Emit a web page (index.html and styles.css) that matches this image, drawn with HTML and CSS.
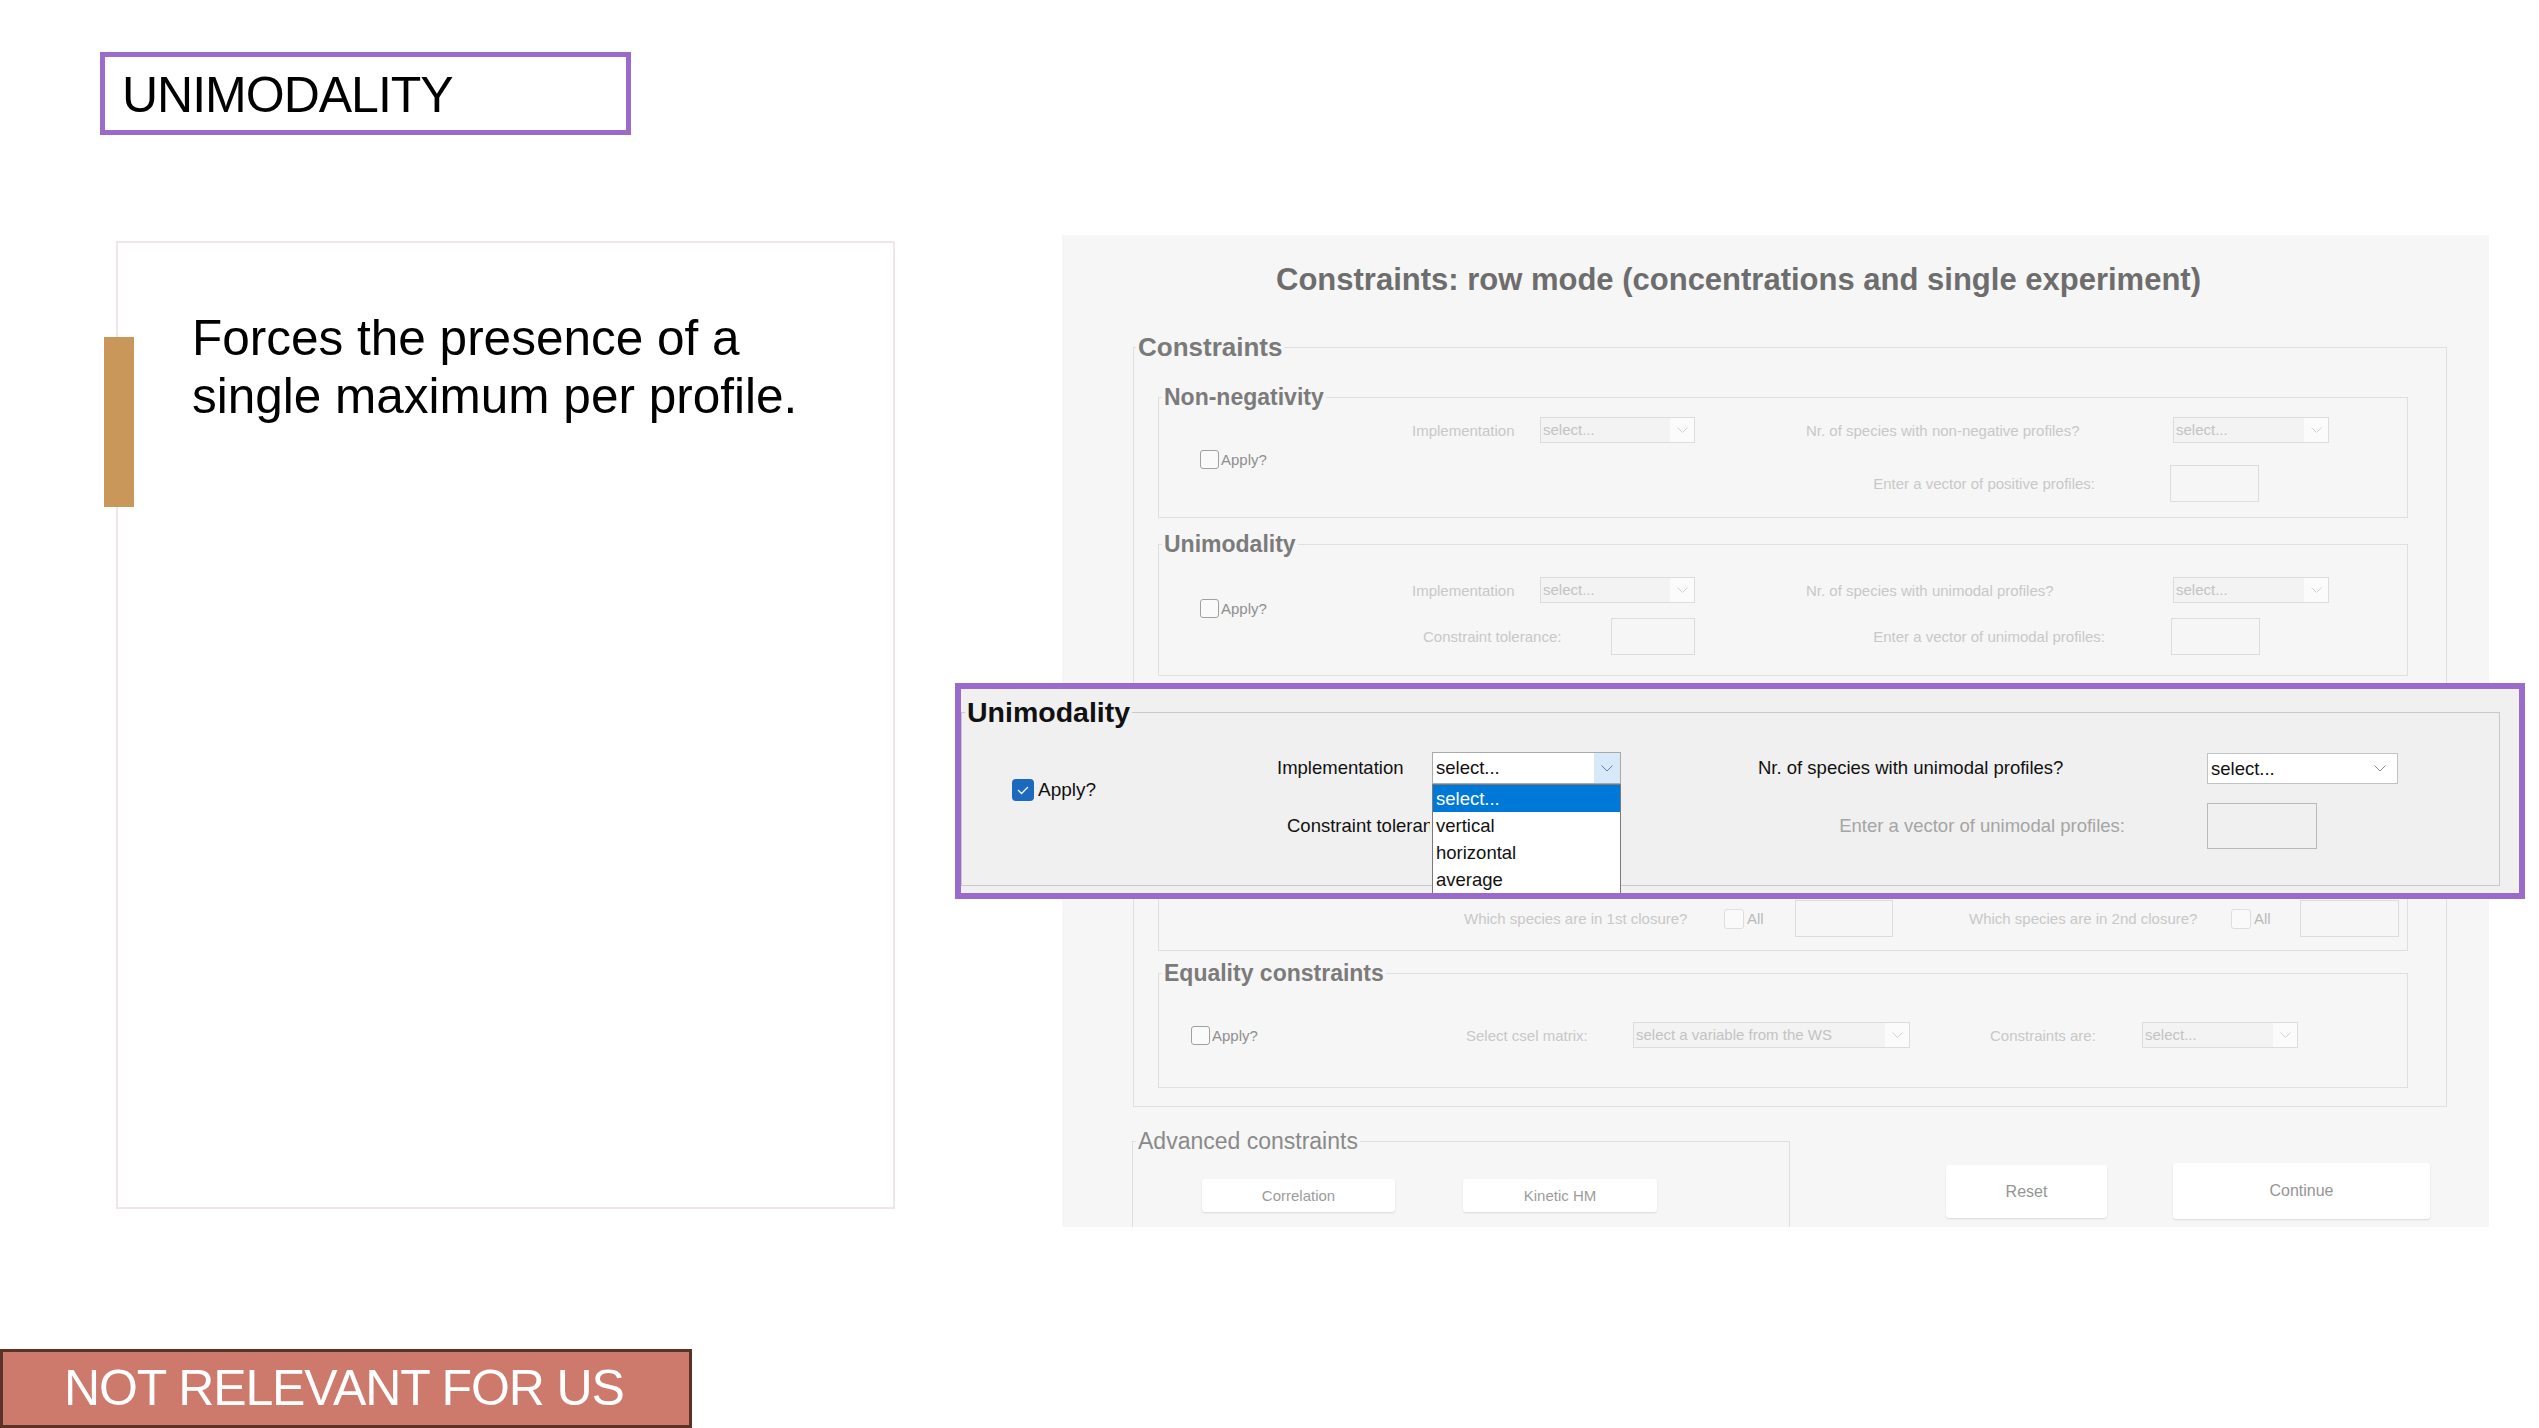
FILE: index.html
```html
<!DOCTYPE html>
<html>
<head>
<meta charset="utf-8">
<title>Unimodality</title>
<link rel="stylesheet" href="styles.css">
</head>
<body>
<div class="slide">
  <div class="title-box"><h1 class="title">UNIMODALITY</h1></div>

  <div class="main">
    <div class="card">
      <span class="accent"></span>
      <p class="card-text">Forces the presence of a<br>single maximum per profile.</p>
    </div>

    <div class="app">
      <h2 class="app-title">Constraints: row mode (concentrations and single experiment)</h2>

      <fieldset class="fs-outer">
        <legend class="lg-outer">Constraints</legend>

        <fieldset class="fs fs-nonneg">
          <legend class="lg">Non-negativity</legend>
          <div class="fs-body">
            <div class="chk-col"><span class="cb"></span><span class="cb-label">Apply?</span></div>
            <div class="rows gap22">
              <div class="row">
                <span class="lbl c-impl">Implementation</span>
                <span class="sel s155"><span class="sel-text">select...</span><span class="sel-arrow"><svg width="11" height="6" viewBox="0 0 11 6"><path d="M0.5 0.5l5 5 5-5" fill="none" stroke="currentColor"/></svg></span></span>
                <span class="lbl c-nr">Nr. of species with non-negative profiles?</span>
                <span class="sel s156"><span class="sel-text">select...</span><span class="sel-arrow"><svg width="11" height="6" viewBox="0 0 11 6"><path d="M0.5 0.5l5 5 5-5" fill="none" stroke="currentColor"/></svg></span></span>
              </div>
              <div class="row">
                <span class="lbl c-enter">Enter a vector of positive profiles:</span>
                <span class="inp i89"></span>
              </div>
            </div>
          </div>
        </fieldset>

        <fieldset class="fs fs-uni">
          <legend class="lg">Unimodality</legend>
          <div class="fs-body">
            <div class="chk-col chk-up"><span class="cb"></span><span class="cb-label">Apply?</span></div>
            <div class="rows gap15">
              <div class="row">
                <span class="lbl c-impl">Implementation</span>
                <span class="sel s155"><span class="sel-text">select...</span><span class="sel-arrow"><svg width="11" height="6" viewBox="0 0 11 6"><path d="M0.5 0.5l5 5 5-5" fill="none" stroke="currentColor"/></svg></span></span>
                <span class="lbl c-nr">Nr. of species with unimodal profiles?</span>
                <span class="sel s156"><span class="sel-text">select...</span><span class="sel-arrow"><svg width="11" height="6" viewBox="0 0 11 6"><path d="M0.5 0.5l5 5 5-5" fill="none" stroke="currentColor"/></svg></span></span>
              </div>
              <div class="row">
                <div class="c-tol"><span class="lbl tol-text">Constraint tolerance:</span><span class="inp i84"></span></div>
                <span class="lbl c-enter2">Enter a vector of unimodal profiles:</span>
                <span class="inp i89"></span>
              </div>
            </div>
          </div>
        </fieldset>

        <fieldset class="fs fs-clo">
          <legend class="lg">Closure</legend>
          <div class="row">
            <span class="lbl clo-l1">Which species are in 1st closure?</span>
            <span class="cb-group g71"><span class="cb cb20"></span><span class="cb-all">All</span></span>
            <span class="inp i98"></span>
            <span class="lbl clo-l2">Which species are in 2nd closure?</span>
            <span class="cb-group g69"><span class="cb cb20"></span><span class="cb-all">All</span></span>
            <span class="inp i99"></span>
          </div>
        </fieldset>

        <fieldset class="fs fs-eq">
          <legend class="lg">Equality constraints</legend>
          <div class="row">
            <span class="eq-chk"><span class="cb"></span><span class="cb-label">Apply?</span></span>
            <span class="lbl eq-l1">Select csel matrix:</span>
            <span class="sel s277"><span class="sel-text">select a variable from the WS</span><span class="sel-arrow"><svg width="11" height="6" viewBox="0 0 11 6"><path d="M0.5 0.5l5 5 5-5" fill="none" stroke="currentColor"/></svg></span></span>
            <span class="lbl eq-l2">Constraints are:</span>
            <span class="sel s156"><span class="sel-text">select...</span><span class="sel-arrow"><svg width="11" height="6" viewBox="0 0 11 6"><path d="M0.5 0.5l5 5 5-5" fill="none" stroke="currentColor"/></svg></span></span>
          </div>
        </fieldset>
      </fieldset>

      <div class="app-bottom">
        <fieldset class="fs-adv">
          <legend class="lg-adv">Advanced constraints</legend>
          <div class="btn-row">
            <span class="btn btn-corr">Correlation</span>
            <span class="btn btn-kin">Kinetic HM</span>
          </div>
        </fieldset>
        <span class="btn btn-reset">Reset</span>
        <span class="btn btn-cont">Continue</span>
      </div>
    </div>
  </div>

  <div class="badge">NOT RELEVANT FOR US</div>

  <div class="hl">
    <fieldset class="fs-hl">
      <legend class="lg-hl">Unimodality</legend>
      <div class="fs-body">
        <div class="chk-hl"><span class="cb-on"><svg width="14" height="10" viewBox="0 0 14 10"><path d="M2 5l3.5 3.5L12 2" fill="none" stroke="#fff" stroke-width="1.3"/></svg></span><span class="cb-label-hl">Apply?</span></div>
        <div class="rows gap19">
          <div class="row">
            <span class="hlbl h-impl">Implementation</span>
            <span class="hsel hsel1">
              <span class="hsel-text">select...</span>
              <span class="hsel-arrow1"><svg width="12" height="7" viewBox="0 0 12 7"><path d="M0.5 0.5l5.5 5.5 5.5-5.5" fill="none" stroke="currentColor"/></svg></span>
              <span class="dd">
                <span class="dd-item dd-on">select...</span>
                <span class="dd-item">vertical</span>
                <span class="dd-item">horizontal</span>
                <span class="dd-item">average</span>
              </span>
            </span>
            <span class="hlbl h-nr">Nr. of species with unimodal profiles?</span>
            <span class="hsel hsel2">
              <span class="hsel-text">select...</span>
              <span class="hsel-arrow2"><svg width="12" height="7" viewBox="0 0 12 7"><path d="M0.5 0.5l5.5 5.5 5.5-5.5" fill="none" stroke="currentColor"/></svg></span>
            </span>
          </div>
          <div class="row">
            <div class="h-tol"><span class="hlbl h-tol-clip">Constraint tolerance:</span></div>
            <span class="hlbl h-enter">Enter a vector of unimodal profiles:</span>
            <span class="hinp"></span>
          </div>
        </div>
      </div>
    </fieldset>
  </div>
</div>
</body>
</html>
```

FILE: styles.css
```css
* { box-sizing: border-box; }
html, body { margin: 0; padding: 0; }
body {
  width: 2539px;
  height: 1428px;
  overflow: hidden;
  background: #ffffff;
  font-family: "Liberation Sans", Arial, Helvetica, sans-serif;
}
.slide { position: relative; display: flow-root; width: 2539px; height: 1428px; }

/* Slide title */
.title-box {
  margin: 52px 0 0 100px;
  width: 531px;
  height: 83px;
  border: 5px solid #9a6bcb;
  padding: 13px 0 0 17px;
}
.title {
  margin: 0;
  font-size: 50px;
  font-weight: normal;
  line-height: 50px;
  letter-spacing: -1px;
  color: #000;
  white-space: nowrap;
}

.main { display: flex; align-items: flex-start; margin-top: 100px; }

/* Text card */
.card {
  position: relative;
  flex: none;
  margin: 6px 0 0 116px;
  width: 779px;
  height: 968px;
  border: 2px solid #eee6ea;
  background: #fff;
  padding: 66px 0 0 74px;
}
.accent {
  position: absolute;
  left: -14px;
  top: 94px;
  width: 30px;
  height: 170px;
  background: #c9975a;
}
.card-text {
  margin: 0;
  font-size: 49.5px;
  line-height: 58px;
  color: #000;
  white-space: nowrap;
}

/* App screenshot */
.app {
  flex: none;
  margin-left: 167px;
  width: 1427px;
  height: 992px;
  background: #f6f6f6;
  overflow: hidden;
  padding-top: 27px;
}
.app-title {
  margin: 0;
  padding-left: 214px;
  font-size: 31px;
  font-weight: bold;
  line-height: 36px;
  color: #6d6d6d;
  white-space: nowrap;
}

fieldset { margin: 0; padding: 0; border: 1px solid #dfdfdf; min-width: 0; }
legend { padding: 0 2px; margin-left: 3px; white-space: nowrap; }

.fs-outer { margin: 34px 0 0 71px; width: 1314px; padding: 21px 0 18px 0; }
.lg-outer { font-size: 26px; font-weight: bold; line-height: 30px; color: #7a7a7a; margin-left: 2px; }

.fs { width: 1250px; margin-left: 24px; }
.lg { font-size: 23px; font-weight: bold; line-height: 28px; color: #7b7b7b; }

.fs-nonneg { padding: 6px 0 15px 0; }
.fs-uni { margin-top: 12px; padding: 19px 0 20px 0; }
.fs-clo { margin-top: 10px; padding: 186px 0 13px 0; }
.fs-eq { margin-top: 8px; padding: 35px 0 39px 0; }

.fs-body { display: flex; align-items: center; }
.chk-col { flex: none; width: 253px; padding-left: 41px; display: flex; align-items: center; }
.chk-up { margin-bottom: 16px; }

.cb { flex: none; width: 19px; height: 19px; border: 1px solid #a0a0a0; border-radius: 3px; background: #fafafa; }
.cb20 { width: 20px; height: 20px; border-color: #dedede; }
.cb-label { margin-left: 2px; font-size: 15px; color: #8f8f8f; white-space: nowrap; }

.rows { display: flex; flex-direction: column; }
.gap22 { gap: 22px; }
.gap15 { gap: 15px; }
.gap19 { gap: 19px; }
.row { display: flex; align-items: center; }

.lbl { flex: none; font-size: 15px; color: #c8c8c8; white-space: nowrap; }
.c-impl { width: 128px; }
.c-nr { margin-left: 111px; width: 367px; }
.c-enter { margin-left: 394px; width: 364px; text-align: right; padding-right: 75px; }
.c-tol { flex: none; width: 283px; display: flex; align-items: center; justify-content: space-between; }
.tol-text { margin-left: 11px; }
.c-enter2 { margin-left: 111px; width: 365px; text-align: right; padding-right: 66px; }

.sel { flex: none; display: flex; height: 26px; border: 1px solid #dcdcdc; background: #f3f3f3; }
.s155 { width: 155px; }
.s156 { width: 156px; }
.s277 { width: 277px; }
.sel-text { flex: 1; font-size: 15px; line-height: 24px; color: #c3c3c3; padding-left: 2px; white-space: nowrap; overflow: hidden; }
.sel-arrow { flex: none; width: 24px; background: #fbfbfb; color: #d2d2d2; display: flex; align-items: center; justify-content: center; }

.inp { flex: none; height: 37px; border: 1px solid #dcdcdc; background: #f6f6f6; }
.i84 { width: 84px; }
.i89 { width: 89px; }
.i98 { width: 98px; }
.i99 { width: 99px; }

.clo-l1 { margin-left: 305px; width: 260px; }
.clo-l2 { margin-left: 76px; width: 262px; }
.cb-group { flex: none; display: flex; align-items: center; }
.g71 { width: 71px; }
.g69 { width: 69px; }
.cb-all { margin-left: 3px; font-size: 15px; color: #b9b9b9; }

.eq-chk { flex: none; margin-left: 32px; width: 275px; display: flex; align-items: center; }
.eq-l1 { width: 167px; }
.eq-l2 { margin-left: 80px; width: 152px; }

.app-bottom { display: flex; align-items: flex-start; margin: 20px 0 0 70px; }
.fs-adv { flex: none; width: 658px; padding: 24px 0 80px 0; }
.lg-adv { font-size: 23px; font-weight: normal; line-height: 28px; color: #8a8a8a; }
.btn-row { display: flex; }
.btn {
  flex: none;
  display: flex;
  align-items: center;
  justify-content: center;
  height: 33px;
  background: #ffffff;
  border-radius: 3px;
  box-shadow: 0 1px 2px rgba(0, 0, 0, 0.12);
  font-size: 15px;
  color: #9c9c9c;
}
.btn-corr { margin-left: 69px; width: 193px; }
.btn-kin { margin-left: 68px; width: 194px; }
.btn-reset { margin: 38px 0 0 156px; width: 161px; height: 53px; font-size: 16px; color: #959595; }
.btn-cont { margin: 36px 0 0 66px; width: 257px; height: 56px; font-size: 16px; color: #959595; }

/* Bottom badge */
.badge {
  margin-top: 122px;
  width: 692px;
  height: 79px;
  background: #cd796b;
  border: 3px solid #5b3226;
  padding: 11px 0 0 61px;
  color: #ffffff;
  font-size: 50px;
  line-height: 50px;
  letter-spacing: -1.1px;
  white-space: nowrap;
}

/* Highlighted overlay */
.hl {
  position: absolute;
  left: 955px;
  top: 683px;
  width: 1570px;
  height: 216px;
  border: 6px solid #9a6bcb;
  background: #f0f0f0;
  padding-top: 7px;
  overflow: hidden;
  z-index: 5;
}
.fs-hl { width: 1539px; border: 1px solid #c9c9c9; padding: 24px 0 36px 0; }
.lg-hl { font-size: 28.5px; font-weight: bold; line-height: 32px; color: #111; margin-left: 3px; }
.chk-hl { flex: none; width: 315px; padding-left: 50px; margin-bottom: 21px; display: flex; align-items: center; }
.cb-on {
  flex: none;
  width: 22px;
  height: 22px;
  border-radius: 4px;
  background: #1c69c0;
  display: flex;
  align-items: center;
  justify-content: center;
}
.cb-label-hl { margin-left: 4px; font-size: 19px; color: #111; white-space: nowrap; }
.hlbl { flex: none; font-size: 18.5px; color: #111; white-space: nowrap; }
.h-impl { width: 155px; }
.h-nr { margin-left: 137px; width: 449px; }
.h-tol { flex: none; width: 472px; padding-left: 10px; }
.h-tol-clip { display: block; width: 143px; overflow: hidden; }
.h-enter { width: 458px; text-align: right; padding-right: 82px; color: #a5a5a5; }
.hinp { flex: none; width: 110px; height: 46px; border: 1px solid #b9b9b9; background: #f0f0f0; }

.hsel { position: relative; flex: none; display: flex; background: #ffffff; }
.hsel1 { width: 189px; height: 32px; border: 1px solid #a9a9a9; }
.hsel2 { width: 191px; height: 31px; border: 1px solid #c3c3c3; }
.hsel-text { flex: 1; font-size: 18.5px; line-height: 30px; color: #111; padding-left: 3px; white-space: nowrap; }
.hsel-arrow1 { flex: none; width: 26px; background: #d7e8f8; color: #5d7fa5; display: flex; align-items: center; justify-content: center; }
.hsel-arrow2 { flex: none; width: 34px; color: #8a8a8a; display: flex; align-items: center; justify-content: center; }

.dd {
  position: absolute;
  left: -1px;
  top: 31px;
  width: 189px;
  height: 112px;
  border: 1px solid #7a7a7a;
  background: #ffffff;
  display: flex;
  flex-direction: column;
  z-index: 3;
}
.dd-item { flex: none; height: 27px; line-height: 27px; padding-left: 3px; font-size: 18.5px; color: #111; white-space: nowrap; }
.dd-on { background: #0078d7; color: #ffffff; }
```
